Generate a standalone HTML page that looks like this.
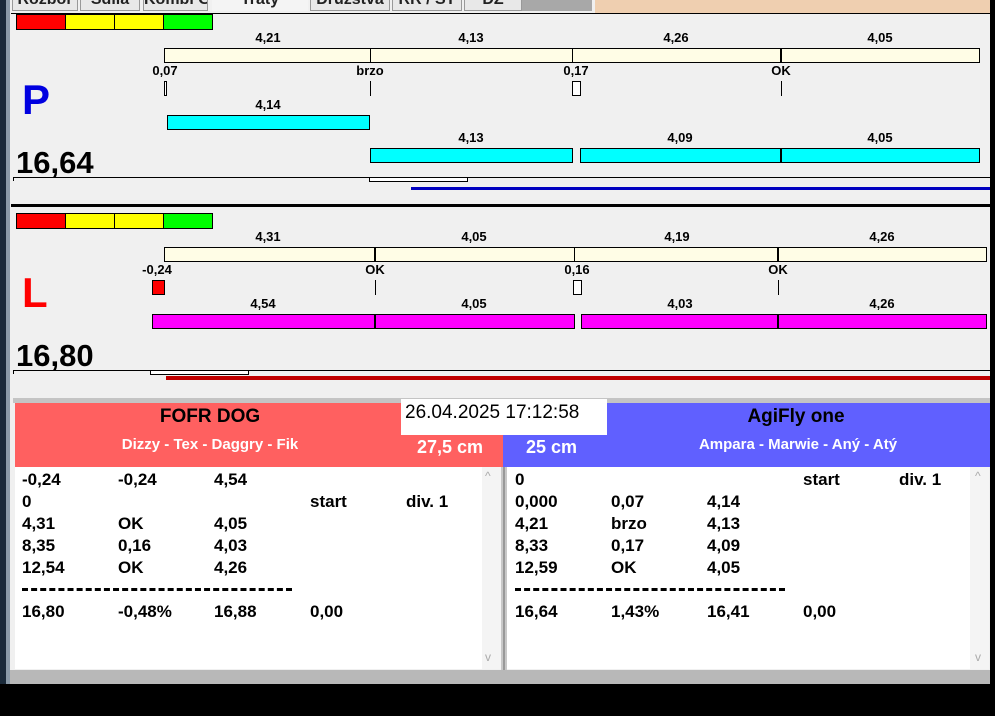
<!DOCTYPE html>
<html><head><meta charset="utf-8"><style>
*{margin:0;padding:0;box-sizing:border-box}
body{width:995px;height:716px;background:#000;position:relative;overflow:hidden;font-family:"Liberation Sans",Arial,sans-serif}
.a{position:absolute}
.t{position:absolute;font-weight:bold;font-size:13px;color:#000;transform:translateX(-50%);white-space:nowrap;line-height:14px}
.bx{position:absolute;border:1px solid #000}
.tab{position:absolute;top:0;height:11px;background:#e8e8e8;border:1px solid #999;border-top:none;overflow:hidden;color:#222}
.tab span{position:absolute;left:0;right:0;top:-9px;text-align:center;font-size:16px;font-weight:bold;line-height:18px;white-space:nowrap}
.row{position:absolute;font-weight:bold;font-size:17px;line-height:20px;white-space:nowrap}
</style></head><body>
<div class="a" style="left:0;top:0;width:7px;height:684px;background:#1a2a3a"></div>
<div class="a" style="left:6px;top:0;width:4px;height:684px;background:#8a9aa8"></div>
<div class="a" style="left:10px;top:0;width:980px;height:684px;background:#f0f0f0"></div>
<div class="a" style="left:10px;top:670px;width:980px;height:14px;background:#b8b8b8"></div>
<div class="tab" style="left:12px;width:66px"><span>Rozbor</span></div>
<div class="tab" style="left:80px;width:60px"><span>Sdila</span></div>
<div class="tab" style="left:143px;width:65px"><span>Kombi Graf</span></div>
<div class="tab" style="left:212px;width:96px;background:#f4f4f4;border:none"><span>Traty</span></div>
<div class="tab" style="left:310px;width:80px"><span>Družstva</span></div>
<div class="tab" style="left:392px;width:70px"><span>RR / ST</span></div>
<div class="tab" style="left:464px;width:58px"><span>DZ</span></div>
<div class="a" style="left:522px;top:0;width:70px;height:11px;background:#a8a8a8"></div>
<div class="a" style="left:595px;top:0;width:395px;height:13px;background:#efcfb0"></div>
<div class="a" style="left:11px;top:13px;width:979px;height:1px;background:#000"></div>

<div class="bx" style="left:16px;top:14px;width:50px;height:16px;background:#f00"></div>
<div class="bx" style="left:65px;top:14px;width:50px;height:16px;background:#ff0"></div>
<div class="bx" style="left:114px;top:14px;width:50px;height:16px;background:#ff0"></div>
<div class="bx" style="left:163px;top:14px;width:50px;height:16px;background:#0f0"></div>
<div class="t" style="left:268px;top:31px">4,21</div><div class="t" style="left:471px;top:31px">4,13</div><div class="t" style="left:676px;top:31px">4,26</div><div class="t" style="left:880px;top:31px">4,05</div>
<div class="bx" style="left:164px;top:48px;width:816px;height:15px;background:#fffde6"></div>
<div class="a" style="left:370px;top:48px;width:1px;height:15px;background:#000"></div>
<div class="a" style="left:572px;top:48px;width:1px;height:15px;background:#000"></div>
<div class="a" style="left:780px;top:48px;width:2px;height:15px;background:#000"></div>
<div class="t" style="left:165px;top:64px">0,07</div><div class="t" style="left:370px;top:64px">brzo</div><div class="t" style="left:576px;top:64px">0,17</div><div class="t" style="left:781px;top:64px">OK</div>
<div class="bx" style="left:164px;top:81px;width:3px;height:15px;background:#fff"></div>
<div class="a" style="left:370px;top:81px;width:1px;height:15px;background:#000"></div>
<div class="bx" style="left:572px;top:81px;width:9px;height:15px;background:#fff"></div>
<div class="a" style="left:781px;top:81px;width:1px;height:15px;background:#000"></div>
<div class="a" style="left:22px;top:77px;font-size:42px;font-weight:bold;color:#0000e0;line-height:46px">P</div>
<div class="t" style="left:268px;top:98px">4,14</div>
<div class="bx" style="left:167px;top:115px;width:203px;height:15px;background:#0ff"></div>
<div class="t" style="left:471px;top:131px">4,13</div><div class="t" style="left:680px;top:131px">4,09</div><div class="t" style="left:880px;top:131px">4,05</div>
<div class="bx" style="left:370px;top:148px;width:203px;height:15px;background:#0ff"></div>
<div class="bx" style="left:580px;top:148px;width:400px;height:15px;background:#0ff"></div>
<div class="a" style="left:780px;top:148px;width:2px;height:15px;background:#000"></div>
<div class="a" style="left:16px;top:145px;font-size:31px;font-weight:bold;line-height:36px">16,64</div>
<div class="a" style="left:13px;top:177px;width:977px;height:1px;background:#000"></div>
<div class="a" style="left:13px;top:177px;width:1px;height:4px;background:#000"></div>
<div class="bx" style="left:369px;top:177px;width:99px;height:5px;background:#fff"></div>
<div class="a" style="left:411px;top:187px;width:579px;height:3px;background:#0000c0"></div>
<div class="a" style="left:11px;top:204px;width:979px;height:3px;background:#000"></div>

<div class="bx" style="left:16px;top:213px;width:50px;height:16px;background:#f00"></div>
<div class="bx" style="left:65px;top:213px;width:50px;height:16px;background:#ff0"></div>
<div class="bx" style="left:114px;top:213px;width:50px;height:16px;background:#ff0"></div>
<div class="bx" style="left:163px;top:213px;width:50px;height:16px;background:#0f0"></div>
<div class="t" style="left:268px;top:230px">4,31</div><div class="t" style="left:474px;top:230px">4,05</div><div class="t" style="left:677px;top:230px">4,19</div><div class="t" style="left:882px;top:230px">4,26</div>
<div class="bx" style="left:164px;top:247px;width:823px;height:15px;background:#fffde6"></div>
<div class="a" style="left:374px;top:247px;width:2px;height:15px;background:#000"></div>
<div class="a" style="left:574px;top:247px;width:1px;height:15px;background:#000"></div>
<div class="a" style="left:777px;top:247px;width:2px;height:15px;background:#000"></div>
<div class="t" style="left:157px;top:263px">-0,24</div><div class="t" style="left:375px;top:263px">OK</div><div class="t" style="left:577px;top:263px">0,16</div><div class="t" style="left:778px;top:263px">OK</div>
<div class="bx" style="left:152px;top:280px;width:13px;height:15px;background:#f00"></div>
<div class="a" style="left:375px;top:280px;width:1px;height:15px;background:#000"></div>
<div class="bx" style="left:573px;top:280px;width:9px;height:15px;background:#fff"></div>
<div class="a" style="left:778px;top:280px;width:1px;height:15px;background:#000"></div>
<div class="a" style="left:22px;top:270px;font-size:42px;font-weight:bold;color:#f00;line-height:46px">L</div>
<div class="t" style="left:263px;top:297px">4,54</div><div class="t" style="left:474px;top:297px">4,05</div><div class="t" style="left:680px;top:297px">4,03</div><div class="t" style="left:882px;top:297px">4,26</div>
<div class="bx" style="left:152px;top:314px;width:423px;height:15px;background:#f0f"></div>
<div class="a" style="left:374px;top:314px;width:2px;height:15px;background:#000"></div>
<div class="bx" style="left:581px;top:314px;width:406px;height:15px;background:#f0f"></div>
<div class="a" style="left:777px;top:314px;width:2px;height:15px;background:#000"></div>
<div class="a" style="left:16px;top:338px;font-size:31px;font-weight:bold;line-height:36px">16,80</div>
<div class="a" style="left:13px;top:370px;width:977px;height:1px;background:#000"></div>
<div class="a" style="left:13px;top:370px;width:1px;height:4px;background:#000"></div>
<div class="bx" style="left:150px;top:370px;width:99px;height:5px;background:#fff"></div>
<div class="a" style="left:166px;top:376px;width:824px;height:4px;background:#c00000"></div>

<div class="a" style="left:13px;top:398px;width:977px;height:5px;background:#c4c4c4"></div>
<div class="a" style="left:15px;top:403px;width:488px;height:64px;background:#ff6060"></div>
<div class="a" style="left:503px;top:403px;width:487px;height:64px;background:#6060ff"></div>
<div class="a" style="left:401px;top:399px;width:206px;height:36px;background:#fff;font-size:19px;line-height:27px;padding-left:4px">26.04.2025 17:12:58</div>
<div class="t" style="left:210px;top:407px;font-size:19px;line-height:20px">FOFR DOG</div>
<div class="t" style="left:210px;top:437px;font-size:15px;color:#fff;line-height:16px">Dizzy - Tex - Daggry - Fik</div>
<div class="a" style="left:417px;top:437px;font-size:18px;font-weight:bold;color:#fff;line-height:20px">27,5 cm</div>
<div class="a" style="left:526px;top:437px;font-size:18px;font-weight:bold;color:#fff;line-height:20px">25 cm</div>
<div class="t" style="left:796px;top:407px;font-size:19px;line-height:20px">AgiFly one</div>
<div class="t" style="left:798px;top:437px;font-size:15px;color:#fff;line-height:16px">Ampara - Marwie - Aný - Atý</div>
<div class="a" style="left:15px;top:467px;width:486px;height:202px;background:#fff"></div>
<div class="a" style="left:482px;top:467px;width:19px;height:202px;background:#f4f4f4"></div>
<div class="a" style="left:501px;top:467px;width:6px;height:203px;background:#c8c8c8"></div>
<div class="a" style="left:503px;top:467px;width:2px;height:203px;background:#999"></div>
<div class="a" style="left:507px;top:467px;width:482px;height:202px;background:#fff"></div>
<div class="a" style="left:970px;top:467px;width:19px;height:202px;background:#f4f4f4"></div>
<div class="a" style="left:485px;top:469px;font-size:12px;color:#aaa">^</div>
<div class="a" style="left:485px;top:650px;font-size:12px;color:#aaa">v</div>
<div class="a" style="left:975px;top:469px;font-size:12px;color:#aaa">^</div>
<div class="a" style="left:975px;top:650px;font-size:12px;color:#aaa">v</div>

<div class="row" style="left:22px;top:470px">-0,24</div><div class="row" style="left:118px;top:470px">-0,24</div><div class="row" style="left:214px;top:470px">4,54</div>
<div class="row" style="left:22px;top:492px">0</div><div class="row" style="left:310px;top:492px">start</div><div class="row" style="left:406px;top:492px">div. 1</div>
<div class="row" style="left:22px;top:514px">4,31</div><div class="row" style="left:118px;top:514px">OK</div><div class="row" style="left:214px;top:514px">4,05</div>
<div class="row" style="left:22px;top:536px">8,35</div><div class="row" style="left:118px;top:536px">0,16</div><div class="row" style="left:214px;top:536px">4,03</div>
<div class="row" style="left:22px;top:558px">12,54</div><div class="row" style="left:118px;top:558px">OK</div><div class="row" style="left:214px;top:558px">4,26</div>
<div class="a" style="left:22px;top:588px;width:270px;height:3px;border-top:3px dashed #000"></div>
<div class="row" style="left:22px;top:602px">16,80</div><div class="row" style="left:118px;top:602px">-0,48%</div><div class="row" style="left:214px;top:602px">16,88</div><div class="row" style="left:310px;top:602px">0,00</div>

<div class="row" style="left:515px;top:470px">0</div><div class="row" style="left:803px;top:470px">start</div><div class="row" style="left:899px;top:470px">div. 1</div>
<div class="row" style="left:515px;top:492px">0,000</div><div class="row" style="left:611px;top:492px">0,07</div><div class="row" style="left:707px;top:492px">4,14</div>
<div class="row" style="left:515px;top:514px">4,21</div><div class="row" style="left:611px;top:514px">brzo</div><div class="row" style="left:707px;top:514px">4,13</div>
<div class="row" style="left:515px;top:536px">8,33</div><div class="row" style="left:611px;top:536px">0,17</div><div class="row" style="left:707px;top:536px">4,09</div>
<div class="row" style="left:515px;top:558px">12,59</div><div class="row" style="left:611px;top:558px">OK</div><div class="row" style="left:707px;top:558px">4,05</div>
<div class="a" style="left:515px;top:588px;width:270px;height:3px;border-top:3px dashed #000"></div>
<div class="row" style="left:515px;top:602px">16,64</div><div class="row" style="left:611px;top:602px">1,43%</div><div class="row" style="left:707px;top:602px">16,41</div><div class="row" style="left:803px;top:602px">0,00</div>
</body></html>
